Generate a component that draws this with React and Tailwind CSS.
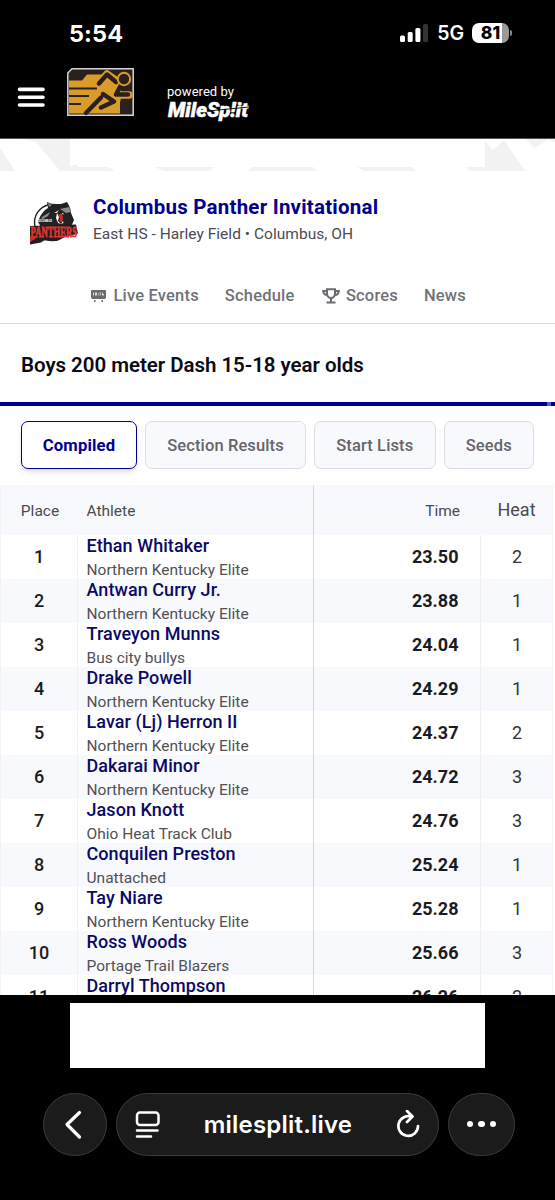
import React from 'react';

const results = [
  { place: 1, name: 'Ethan Whitaker', team: 'Northern Kentucky Elite', time: '23.50', heat: 2 },
  { place: 2, name: 'Antwan Curry Jr.', team: 'Northern Kentucky Elite', time: '23.88', heat: 1 },
  { place: 3, name: 'Traveyon Munns', team: 'Bus city bullys', time: '24.04', heat: 1 },
  { place: 4, name: 'Drake Powell', team: 'Northern Kentucky Elite', time: '24.29', heat: 1 },
  { place: 5, name: 'Lavar (Lj) Herron II', team: 'Northern Kentucky Elite', time: '24.37', heat: 2 },
  { place: 6, name: 'Dakarai Minor', team: 'Northern Kentucky Elite', time: '24.72', heat: 3 },
  { place: 7, name: 'Jason Knott', team: 'Ohio Heat Track Club', time: '24.76', heat: 3 },
  { place: 8, name: 'Conquilen Preston', team: 'Unattached', time: '25.24', heat: 1 },
  { place: 9, name: 'Tay Niare', team: 'Northern Kentucky Elite', time: '25.28', heat: 1 },
  { place: 10, name: 'Ross Woods', team: 'Portage Trail Blazers', time: '25.66', heat: 3 },
  { place: 11, name: 'Darryl Thompson', team: '', time: '26.26', heat: 2 },
];

const StatusBar = () => (
  <div className="flex h-[66px] items-center justify-between pl-[69px] pr-[43px] font-['Inter',sans-serif] text-white">
    <span className="mt-[2px] text-[23.5px] font-bold leading-none tracking-[0.1px]">5:54</span>
    <div className="flex items-center">
      <svg width="30" height="20" viewBox="0 0 30 20" fill="#fff">
        <rect x="1" y="12.5" width="5" height="6.5" rx="1.5" />
        <rect x="8.7" y="9" width="5" height="10" rx="1.5" />
        <rect x="16.4" y="5" width="5" height="14" rx="1.5" />
        <rect x="24" y="1" width="5" height="18" rx="1.5" fill="#333" />
      </svg>
      <span className="ml-[8px] mt-[2px] text-[19.5px] font-semibold leading-none">5G</span>
      <div className="ml-[8px] flex h-5 w-[37px] items-center justify-center rounded-[7px] bg-[linear-gradient(90deg,#fff_81%,#999_81%)] text-[17.5px] font-extrabold text-black">
        81
      </div>
      <span className="ml-px h-[6px] w-[2px] rounded-r-full bg-[#888]"></span>
    </div>
  </div>
);

const RunnerLogo = () => (
  <svg width="67" height="48" viewBox="0 0 67 48">
    <path d="M5 .8h61.200v46.400H.8V5z" fill="#2a211d" stroke="#d4d4d8" strokeWidth="1.500" />
    <path d="M2 12.500h13l5-6h33V45.500H2z" fill="#d99c2b" />
    <path d="M44 2h21v10H44z" fill="#2a211d" />
    <path d="M2 20.500h28M2 28h20M2 36h12" stroke="#2a211d" strokeWidth="2" />
    <path d="M32 15l8-9 10 7 1 1-3 13h14M50 14v17" fill="none" stroke="#d99c2b" strokeWidth="7.500" strokeLinejoin="round" strokeLinecap="round" />
    <path d="M32 15.500l8-9 9 7.500M54 17l-5 9.500h12M36 26l11 7.500-13 6M34 29.500L19 45" fill="none" stroke="#2a211d" strokeWidth="4.400" strokeLinecap="round" strokeLinejoin="round" />
    <circle cx="57" cy="11" r="6.200" fill="#2a211d" stroke="#d99c2b" strokeWidth="2" />
  </svg>
);

const SiteHeader = () => (
  <header className="flex h-[72px] items-start text-white">
    <svg className="ml-[17px] mt-[20px]" width="28" height="22" viewBox="0 0 28 22" stroke="#fff" strokeWidth="3.600" strokeLinecap="round">
      <path d="M2.500 3.400h23.500M2.500 11.200h23.500M2.500 19h23.500" />
    </svg>
    <div className="ml-[22px] mt-[2px]"><RunnerLogo /></div>
    <div className="ml-[33px] mt-[18px] flex flex-col">
      <span className="text-[13px] leading-4 tracking-[0.05px]">powered by</span>
      <svg className="overflow-visible" width="84" height="26" viewBox="0 0 84 26">
        <text x="1" y="16.5" textLength="80" lengthAdjust="spacingAndGlyphs" stroke="#fff" strokeWidth=".5" className="fill-white font-['Roboto',sans-serif] text-[21px] font-black italic">MileSp!it</text>
        <path d="M41 11l41-4" stroke="#000" strokeWidth=".9" />
      </svg>
    </div>
  </header>
);

const HeaderPattern = () => (
  <svg className="block" width="555" height="32" viewBox="0 0 555 32" fill="#f2f2f3">
    <path d="M0 9l15 23H0zM22 0h48v28l6-3 4 7H60L36 3zM72 28h36l7 4H72zM154 28h61l-6 4h-45zM253 28h60l4 4h-70zM357 28h54l6 4h-53zM466 28h20v4h-16zM485 2l8 9 11-10 21 31h-40zM526 0h29v3l-7-2-14 8z" />
    <path d="M0 0h22l38 32H28z" fill="#fff" />
  </svg>
);

const PantherLogo = () => (
  <svg className="overflow-visible" width="50" height="44" viewBox="0 0 50 44">
    <circle cx="23.500" cy="21.500" r="18" fill="#fff" stroke="#222" strokeWidth="1.400" />
    <path d="M9 21c2-7 6-12 10-14l-1-6 5 2h9l6-2c2 3 4 7 4 11l3 7-3 7H12z" fill="#222" />
    <path d="M19 2l4 2-3 2zM31 8l9-2 2 5-5 1zM13 16l8-5-2 4-7 4z" fill="#8a8a8a" />
    <path d="M25 12l5-3-2 3z" fill="#ddd" />
    <path d="M28 12l2 4-1 4 3 3-3-1-2-5z" fill="#fff" />
    <path d="M29.500 13.500l3-1 1.500 3-.500 5-3 1 .500-4z" fill="#d42a25" />
    <path d="M33 12l1 2 .500-2M32 23l2-3 .500 2" fill="#fff" />
    <path d="M1 25l46-1.500 2 9-6 2-8 1-6 4H15l-3 2-11 2z" fill="#1f1f1f" />
    <text x="8" y="21" textLength="15" lengthAdjust="spacingAndGlyphs" fill="#fff" className="font-['Roboto',sans-serif] text-[4px] font-bold">COLUMBUS</text>
    <text x="1.5" y="36" textLength="46.5" lengthAdjust="spacingAndGlyphs" fill="#dd3531" stroke="#dd3531" strokeWidth=".8" className="font-['Liberation_Serif',serif] text-[14px] font-bold">PANTHERS</text>
    <path d="M1 35l8 0-3 3-5 3z" fill="#c9302c" />
  </svg>
);

const MeetHeader = () => (
  <div className="flex h-[90px] items-start pl-[29px]">
    <div className="mt-[30px]"><PantherLogo /></div>
    <div className="ml-[14px] mt-[24px]">
      <h1 className="whitespace-nowrap text-[20.5px] font-bold leading-6 tracking-[0.22px] text-[#00008f]">Columbus Panther Invitational</h1>
      <p className="mt-[5px] text-[15.5px] leading-5 tracking-[0.03px] text-[#4b4b52]">East HS - Harley Field • Columbus, OH</p>
    </div>
  </div>
);

const ScoreboardIcon = () => (
  <svg width="15" height="14" viewBox="0 0 15 14" fill="#6b6b70">
    <path d="M1 1h13a1 1 0 0 1 1 1v6.500l-1 1.500H1L0 8.500V2a1 1 0 0 1 1-1zM3 11h1.500v2H3zM10.500 11H12v2h-1.500z" />
    <path d="M2 3.500h1v3H2zM4 3.500h2v3H4zM7 4h.8v.8H7zM7 5.600h.8v.8H7zM8.700 3.500h1v3h-1zM11 3.500h1v1.500h1v1.500h-2z" fill="#ddd" />
  </svg>
);

const TrophyIcon = () => (
  <svg width="18" height="16" viewBox="0 0 18 16" fill="none" stroke="#6b6b70" strokeWidth="2">
    <path d="M5 1.200h8v4c0 3-2 4.800-4 4.800S5 8.200 5 5.200zM5 3H1.200C1.200 5.500 2.500 7 6 7.300M13 3h3.800C16.800 5.500 15.500 7 12 7.300M9 10v4M4.500 14.600h9" />
  </svg>
);

const NavBar = () => (
  <nav className="flex h-[63px] items-center whitespace-nowrap border-b border-[#dcdcdf] pl-[91px] pt-[8px] text-[16.5px] font-medium tracking-[0.18px] text-[#6f7377]">
    <span className="flex items-center gap-[7.5px]"><ScoreboardIcon />Live Events</span>
    <span className="ml-[26px]">Schedule</span>
    <span className="ml-[27.5px] flex items-center gap-[6px]"><TrophyIcon />Scores</span>
    <span className="ml-[26px]">News</span>
  </nav>
);

const ResultTabs = () => (
  <div className="flex h-[79px] gap-2 pl-[21px] pt-[15px] text-[16.5px] font-medium tracking-[0.12px] text-[#65656b]">
    <button className="h-12 w-[116px] rounded-[7px] border border-[#00008f] bg-white pt-px text-[16.7px] font-bold text-[#00008f] shadow-md shadow-black/10">Compiled</button>
    <button className="h-12 w-[161px] rounded-[7px] border border-[#dfdfe3] bg-[#f8f9fd] pt-[2px]">Section Results</button>
    <button className="h-12 w-[121.5px] rounded-[7px] border border-[#dfdfe3] bg-[#f8f9fd] pt-[2px]">Start Lists</button>
    <button className="h-12 w-[90.5px] rounded-[7px] border border-[#dfdfe3] bg-[#f8f9fd] pt-[2px]">Seeds</button>
  </div>
);

const ResultsTable = () => (
  <div className="mr-[2px] border-x border-[#f3f3f5]">
    <div className="grid h-[50px] grid-cols-[77px_235px_167px_1fr] bg-[#f8f9fd] text-[15.5px] leading-[52px] text-[#4b4b50]">
      <span className="pl-px text-center">Place</span>
      <span className="pl-[8.5px]">Athlete</span>
      <span className="h-[50px] border-l border-[#d8d8dc] pr-[20px] text-right">Time</span>
      <span className="pl-px text-center text-[18px] leading-[49px]">Heat</span>
    </div>
    {results.map((r) => (
      <div key={r.place} className="grid h-11 grid-cols-[77px_235px_167px_1fr] text-[18px] leading-[43px] odd:bg-[#f8f9fd]">
        <span className="border-r border-[#f1f1f4] text-center font-medium text-[#1b1b1f]">{r.place}</span>
        <div className="pl-[8.5px]">
          <div className="text-[18px] font-medium leading-[22px] tracking-[0.06px] text-[#0a0a66]">{r.name}</div>
          <div className="mt-[3px] text-[15.5px] leading-5 tracking-[0.02px] text-[#505055]">{r.team}</div>
        </div>
        <span className="border-l border-[#d8d8dc] pr-[21.5px] text-right font-bold text-[#1b1b1f]">{r.time}</span>
        <span className="border-l border-[#efeff2] pl-px text-center text-[#333338]">{r.heat}</span>
      </div>
    ))}
  </div>
);

const BrowserBar = () => (
  <div className="flex h-[63px] gap-[9px] pl-[43px] text-white">
    <div className="flex w-[64px] items-center justify-center rounded-full border border-[#3c3c3c] bg-[#1b1b1b] pr-[5px]">
      <svg width="18" height="30" viewBox="0 0 18 30" fill="none" stroke="#fff" strokeWidth="3.200" strokeLinecap="round" strokeLinejoin="round">
        <path d="M15.500 2.500L3 14.500l12.500 12.500" />
      </svg>
    </div>
    <div className="flex w-[323px] items-center justify-between rounded-full border border-[#3c3c3c] bg-[#1b1b1b] pl-[18px] pr-[17px]">
      <svg width="26" height="30" viewBox="0 0 26 30" fill="none" stroke="#fff" strokeWidth="2.500" strokeLinecap="round">
        <rect x="2" y="2.500" width="21.500" height="12.500" rx="3" />
        <path d="M2 20.500h20.500M2 26.500h14" />
      </svg>
      <span className="font-['Inter',sans-serif] text-[24px] font-semibold tracking-[0.2px]">milesplit.live</span>
      <svg width="26" height="30" viewBox="0 0 26 30" fill="none" stroke="#fff" strokeWidth="2.700" strokeLinecap="round" strokeLinejoin="round">
        <path d="M17 7A9.800 9.800 0 1 0 23 16M12 1l5.500 5.500-5.500 5.500" />
      </svg>
    </div>
    <div className="flex w-[67px] items-center justify-center gap-[5px] rounded-full border border-[#3c3c3c] bg-[#1b1b1b] pb-px">
      <i className="size-[6.5px] rounded-full bg-white"></i>
      <i className="size-[6.5px] rounded-full bg-white"></i>
      <i className="size-[6.5px] rounded-full bg-white"></i>
    </div>
  </div>
);

export default function App() {
  return (
    <div className="h-[1200px] w-[555px] overflow-hidden bg-black font-['Roboto',sans-serif]">
      <StatusBar />
      <SiteHeader />
      <main className="h-[857px] overflow-hidden border-t border-[#555] bg-white">
        <HeaderPattern />
        <MeetHeader />
        <NavBar />
        <h2 className="h-[78px] pl-[21px] text-[20.5px] font-semibold leading-[82px] tracking-[-0.04px] text-[#0b0b14]">Boys 200 meter Dash 15-18 year olds</h2>
        <div className="h-1 bg-[#00008f]">
          <div className="ml-[547px] h-1 w-[4px] bg-[#5c5cb8]"></div>
        </div>
        <ResultTabs />
        <ResultsTable />
      </main>
      <div className="mb-[25px] ml-[70px] mt-[8px] h-[65px] w-[415px] bg-white"></div>
      <BrowserBar />
    </div>
  );
}
